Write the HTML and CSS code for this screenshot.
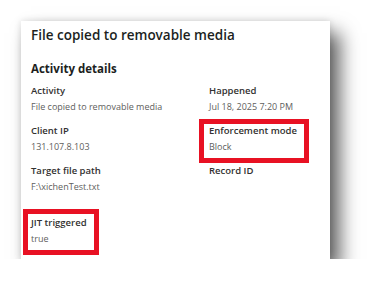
FILE: index.html
```html
<!DOCTYPE html>
<html lang="en">
<head>
    <meta charset="UTF-8">
    <meta name="viewport" content="width=device-width, initial-scale=1.0">
    <title>Activity details</title>
    <link rel="stylesheet" href="styles.css">
</head>
<body>
    <div class="card">
        <h1 class="title">File copied to removable media</h1>
        <h2 class="section">Activity details</h2>
        <div class="details">
            <div class="field">
                <div class="label">Activity</div>
                <div class="value">File copied to removable media</div>
            </div>
            <div class="field">
                <div class="label">Happened</div>
                <div class="value">Jul 18, 2025 7:20 PM</div>
            </div>
            <div class="field">
                <div class="label">Client IP</div>
                <div class="value">131.107.8.103</div>
            </div>
            <div class="field mark">
                <div class="label">Enforcement mode</div>
                <div class="value">Block</div>
            </div>
            <div class="field">
                <div class="label">Target file path</div>
                <div class="value">F:\xichenTest.txt</div>
            </div>
            <div class="field">
                <div class="label">Record ID</div>
                <div class="value"></div>
            </div>
            <div class="field mark jit">
                <div class="label">JIT triggered</div>
                <div class="value">true</div>
            </div>
        </div>
    </div>
</body>
</html>
```

FILE: styles.css
```css
body {
    margin: 0;
    background-color: #ffffff;
    font-family: "Segoe UI", "Open Sans", sans-serif;
}

.card {
    margin: 21px 0 0 21px;
    width: 309px;
    height: 238px;
    box-sizing: border-box;
    padding: 4px 10px 0 10px;
    background-color: #ffffff;
    box-shadow: 10px 12px 18px rgba(0, 0, 0, 0.62), 0 0 7px rgba(0, 0, 0, 0.14);
}

.title {
    margin: 0;
    font-size: 13.5px;
    line-height: 20px;
    font-weight: 600;
    color: #201f1e;
}

.section {
    margin: 16px 0 7px 0;
    font-size: 11.5px;
    line-height: 16px;
    font-weight: 700;
    color: #201f1e;
}

.details {
    display: grid;
    grid-template-columns: 178px 1fr;
    row-gap: 10px;
}

.field {
    justify-self: start;
}

.label {
    font-size: 9.5px;
    line-height: 14px;
    font-weight: 600;
    color: #323130;
    margin-bottom: 2px;
}

.value {
    font-size: 9px;
    line-height: 14px;
    min-height: 14px;
    color: #605e5c;
}

.mark {
    outline: 5px solid #e81123;
    padding: 0 7px 4px 5px;
    margin: 0 -7px -4px -5px;
}

.jit {
    margin-top: 10px;
    margin-left: -3px;
    padding-top: 2px;
    padding-left: 3px;
}
```
